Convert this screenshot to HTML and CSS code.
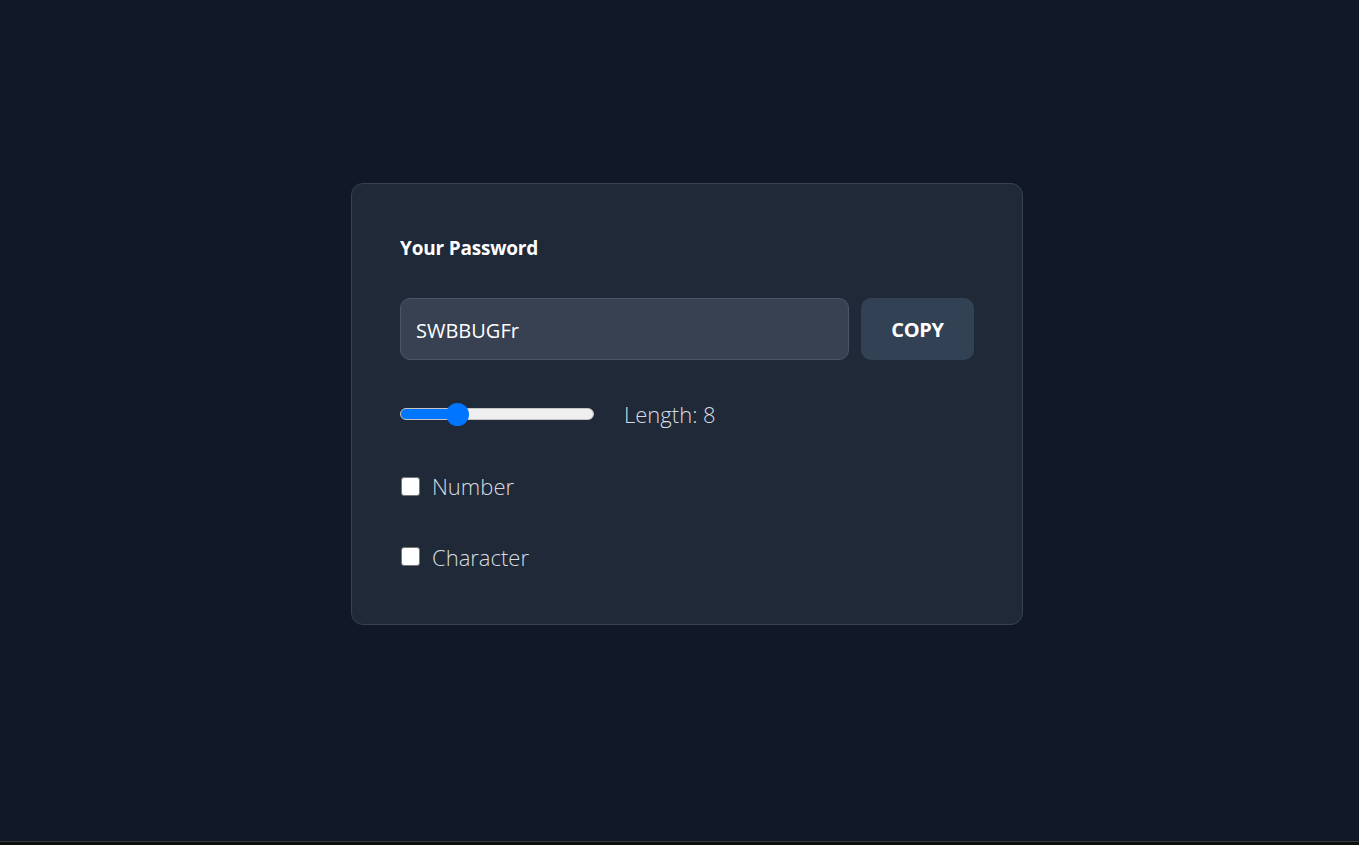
FILE: index.html
```html
<!DOCTYPE html>
<html lang="en">
<head>
<meta charset="utf-8">
<title>Password Generator</title>
<link rel="stylesheet" href="styles.css">
</head>
<body>
<main class="page">
  <section class="card">
    <h1 class="title">Your Password</h1>
    <div class="pw-row">
      <input class="pw-input" type="text" value="SWBBUGFr" readonly>
      <button class="copy-btn" type="button">COPY</button>
    </div>
    <div class="length-row">
      <input class="range" type="range" min="0" max="30" value="8">
      <span class="label">Length: 8</span>
    </div>
    <label class="check-row">
      <input class="check" type="checkbox">
      <span class="label">Number</span>
    </label>
    <label class="check-row">
      <input class="check" type="checkbox">
      <span class="label">Character</span>
    </label>
  </section>
</main>
<div class="bottom-strip"></div>
</body>
</html>
```
FILE: styles.css
```css
* { box-sizing: border-box; }
html, body {
  margin: 0;
  padding: 0;
  height: 100%;
  overflow: hidden;
}
body {
  background: #111827;
  font-family: "Open Sans", "Noto Sans", "Liberation Sans", sans-serif;
  color: #ffffff;
  display: flex;
  flex-direction: column;
}
.page {
  flex: 1;
  display: flex;
  justify-content: center;
  align-items: flex-start;
  padding-top: 183px;
  padding-left: 15px;
}
.card {
  width: 672px;
  height: 442px;
  background: #1f2937;
  border: 1px solid #374151;
  border-radius: 12px;
  padding: 48px 48px;
  display: flex;
  flex-direction: column;
}
.title {
  margin: 0;
  font-size: 19px;
  font-weight: 700;
  line-height: 28px;
  height: 28px;
  padding-top: 2px;
  letter-spacing: -0.2px;
}
.pw-row {
  margin-top: 38px;
  display: flex;
  gap: 12px;
  height: 62px;
}
.pw-input {
  flex: 1;
  min-width: 0;
  height: 62px;
  background: #374151;
  border: 1px solid #4b5563;
  border-radius: 10px;
  color: #ffffff;
  font-family: inherit;
  font-size: 20px;
  font-weight: 500;
  padding: 2px 15px 0;
  outline: none;
}
.copy-btn {
  width: 113px;
  height: 62px;
  background: #334155;
  border: none;
  border-radius: 10px;
  color: #ffffff;
  font-family: inherit;
  font-size: 20px;
  font-weight: 700;
  letter-spacing: -0.3px;
  padding-top: 2px;
}
.length-row {
  margin-top: 35px;
  height: 40px;
  display: flex;
  align-items: center;
  gap: 30px;
}
.label {
  font-size: 22px;
  font-weight: 300;
  color: #d8dce2;
}
.range {
  -webkit-appearance: none;
  appearance: none;
  width: 194px;
  height: 12px;
  margin: 0;
  border-radius: 6px;
  border: 1px solid #c4c4c4;
  background: linear-gradient(to right, #0075ff 0, #0075ff 58px, #efefef 58px, #efefef 100%);
}
.range::-webkit-slider-thumb {
  -webkit-appearance: none;
  appearance: none;
  width: 23px;
  height: 23px;
  border-radius: 50%;
  background: #0075ff;
  border: none;
}
.check-row {
  margin-top: 33px;
  height: 40px;
  display: flex;
  align-items: center;
  gap: 12px;
}
.check-row + .check-row {
  margin-top: 32px;
}
.check {
  -webkit-appearance: none;
  appearance: none;
  width: 19px;
  height: 19px;
  margin: 0 0 0 1px;
  background: #ffffff;
  border: 1px solid #767676;
  border-radius: 3px;
}
.bottom-strip {
  height: 4px;
  background: #0f0f0f;
  border-top: 1px solid #3a3a3a;
}
```
